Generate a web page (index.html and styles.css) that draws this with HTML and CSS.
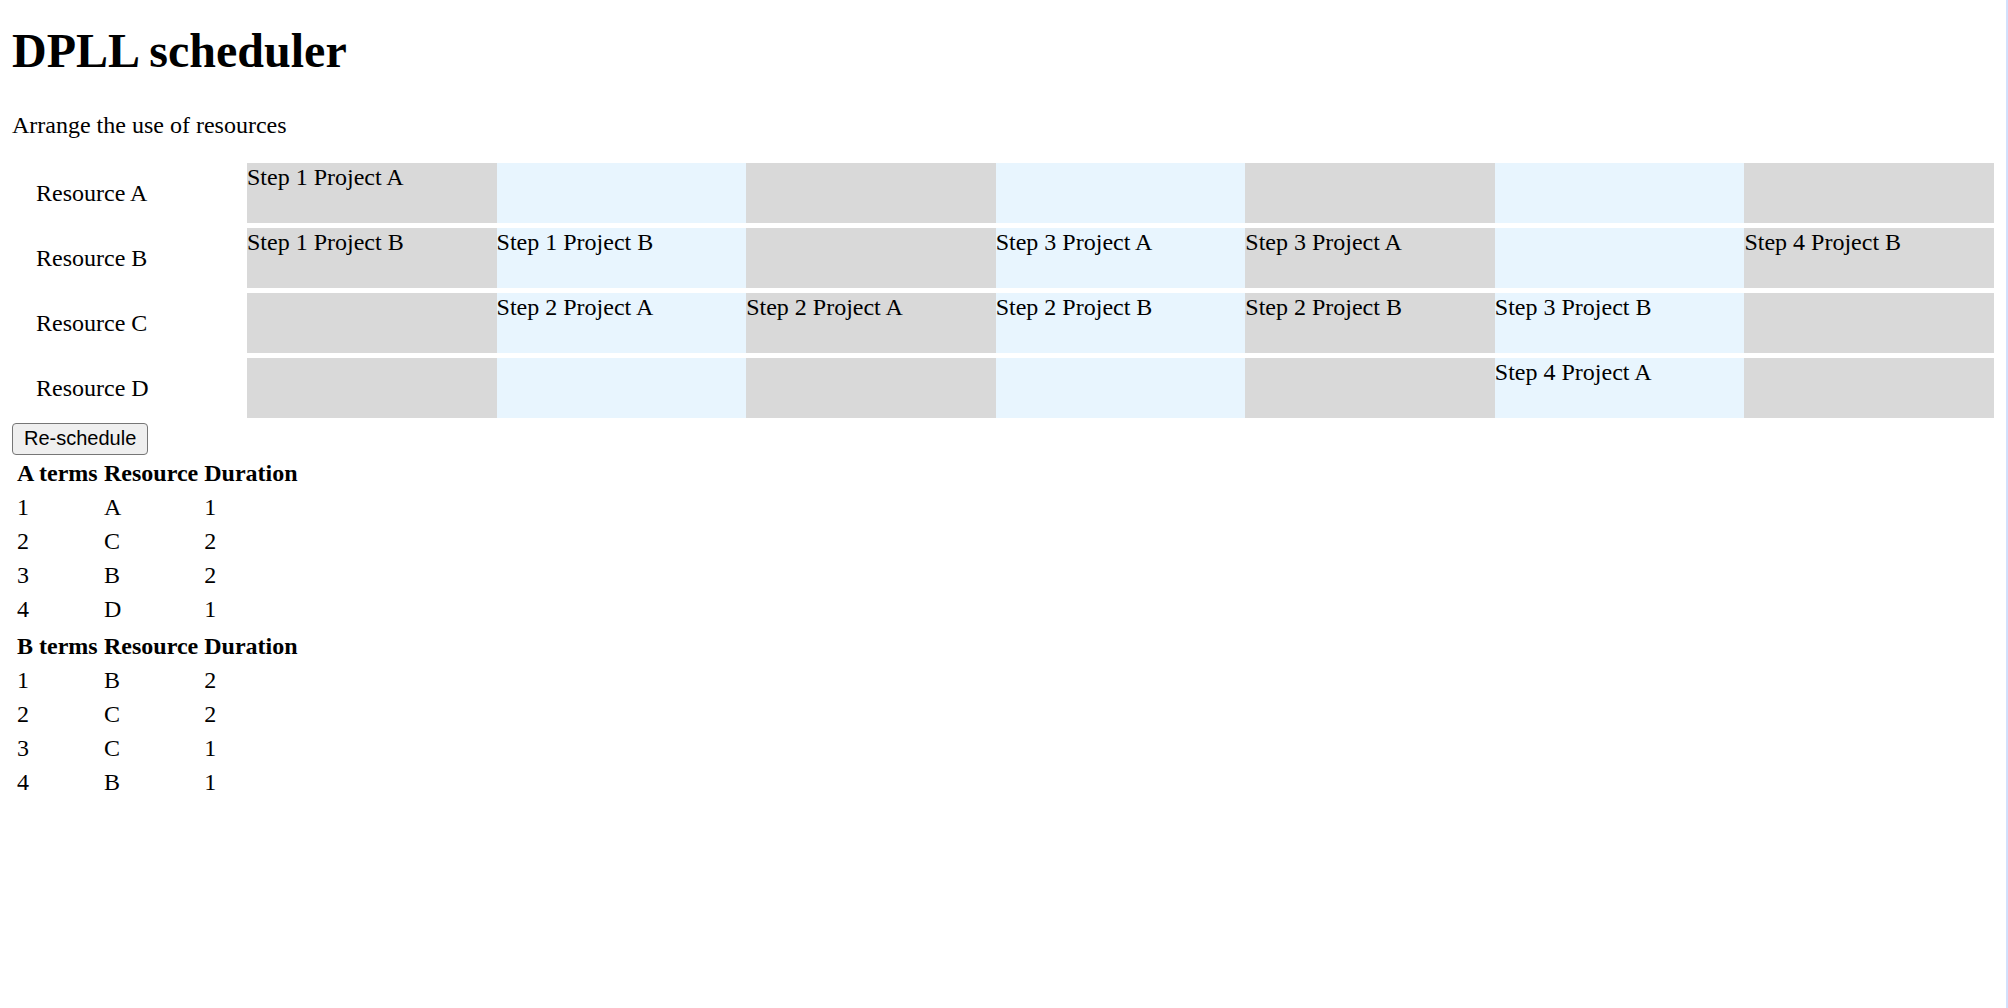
FILE: index.html
```html
<!DOCTYPE html>
<html lang="en">
<head>
<meta charset="utf-8">
<meta name="viewport" content="width=device-width, initial-scale=1">
<title>DPLL scheduler</title>
<link rel="stylesheet" href="styles.css">
</head>
<body>
<main class="page">
  <h1 class="title">DPLL scheduler</h1>
  <p class="intro">Arrange the use of resources</p>

  <section class="schedule" aria-label="Schedule">
    <div class="row">
      <div class="resource">Resource A</div>
      <div class="slot">Step 1 Project A</div>
      <div class="slot"></div>
      <div class="slot"></div>
      <div class="slot"></div>
      <div class="slot"></div>
      <div class="slot"></div>
      <div class="slot"></div>
    </div>
    <div class="row">
      <div class="resource">Resource B</div>
      <div class="slot">Step 1 Project B</div>
      <div class="slot">Step 1 Project B</div>
      <div class="slot"></div>
      <div class="slot">Step 3 Project A</div>
      <div class="slot">Step 3 Project A</div>
      <div class="slot"></div>
      <div class="slot">Step 4 Project B</div>
    </div>
    <div class="row">
      <div class="resource">Resource C</div>
      <div class="slot"></div>
      <div class="slot">Step 2 Project A</div>
      <div class="slot">Step 2 Project A</div>
      <div class="slot">Step 2 Project B</div>
      <div class="slot">Step 2 Project B</div>
      <div class="slot">Step 3 Project B</div>
      <div class="slot"></div>
    </div>
    <div class="row">
      <div class="resource">Resource D</div>
      <div class="slot"></div>
      <div class="slot"></div>
      <div class="slot"></div>
      <div class="slot"></div>
      <div class="slot"></div>
      <div class="slot">Step 4 Project A</div>
      <div class="slot"></div>
    </div>
  </section>

  <button class="reschedule" type="button">Re-schedule</button>

  <table class="terms">
    <thead>
      <tr><th scope="col">A terms</th><th scope="col">Resource</th><th scope="col">Duration</th></tr>
    </thead>
    <tbody>
      <tr><td>1</td><td>A</td><td>1</td></tr>
      <tr><td>2</td><td>C</td><td>2</td></tr>
      <tr><td>3</td><td>B</td><td>2</td></tr>
      <tr><td>4</td><td>D</td><td>1</td></tr>
    </tbody>
  </table>

  <table class="terms">
    <thead>
      <tr><th scope="col">B terms</th><th scope="col">Resource</th><th scope="col">Duration</th></tr>
    </thead>
    <tbody>
      <tr><td>1</td><td>B</td><td>2</td></tr>
      <tr><td>2</td><td>C</td><td>2</td></tr>
      <tr><td>3</td><td>C</td><td>1</td></tr>
      <tr><td>4</td><td>B</td><td>1</td></tr>
    </tbody>
  </table>
</main>
</body>
</html>
```
FILE: styles.css
```css
* {
  box-sizing: border-box;
}

body {
  margin: 0;
  background: #fff;
  color: #000;
  font-family: "Liberation Serif", "Times New Roman", serif;
  font-size: 24px;
  line-height: 27px;
}

.page {
  min-height: 100vh;
  padding: 24px 12px;
  border-right: 2px solid #d3e0fc;
}

.title {
  margin: 0 0 34px;
  font-size: 48px;
  line-height: 54px;
}

.intro {
  margin: 0 0 24px;
}

.schedule {
  display: grid;
  gap: 5px;
  margin-bottom: 5px;
}

.row {
  display: grid;
  grid-template-columns: 235px repeat(7, minmax(0, 1fr));
  min-height: 60px;
}

.resource {
  align-self: center;
  padding-left: 24px;
}

.slot {
  padding-top: 1px;
  background: #e8f5fe;
}

.slot:nth-child(even) {
  background: #d9d9d9;
}

.reschedule {
  display: block;
  padding: 1px 11px 3px;
  border: 1px solid #767676;
  border-radius: 4px;
  background: #efefef;
  color: #000;
  font-family: "Liberation Sans", Arial, sans-serif;
  font-size: 20px;
  line-height: 26px;
}

.terms {
  border-spacing: 3px;
}

.terms th,
.terms td {
  padding: 2px 1px 2px 2px;
  text-align: left;
}

.terms th:first-child {
  min-width: 84px;
}
```
